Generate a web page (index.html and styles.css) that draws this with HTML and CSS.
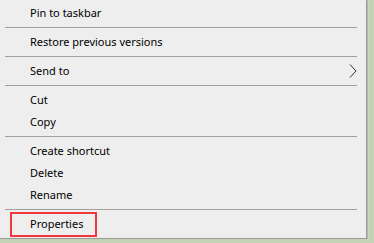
FILE: index.html
```html
<!DOCTYPE html>
<html lang="en">
<head>
    <meta charset="UTF-8">
    <title>Context menu</title>
    <link rel="stylesheet" href="styles.css">
</head>
<body>
    <div class="menu">
        <div class="item">Pin to taskbar</div>
        <div class="sep"></div>
        <div class="item">Restore previous versions</div>
        <div class="sep"></div>
        <div class="item">Send to
            <svg class="arrow" width="8" height="14" viewBox="0 0 8 14">
                <polyline points="1,0.5 7,7 1,13.5" fill="none" stroke="#3b2b33" stroke-width="1"/>
            </svg>
        </div>
        <div class="sep"></div>
        <div class="item">Cut</div>
        <div class="item">Copy</div>
        <div class="sep"></div>
        <div class="item">Create shortcut</div>
        <div class="item">Delete</div>
        <div class="item">Rename</div>
        <div class="sep"></div>
        <div class="item highlight">Properties</div>
    </div>
</body>
</html>
```

FILE: styles.css
```css
body {
    margin: 0;
    background: #c3d1b4;
    font-family: 'Noto Sans', sans-serif;
    font-size: 11px;
    color: #000;
}
.menu {
    width: 367px;
    height: 239px;
    padding-top: 2px;
    box-sizing: border-box;
    background: #eeeeee;
    border-right: 1px solid #9a9a9a;
    border-bottom: 1px solid #9a9a9a;
    box-shadow: 1px 1px 0 #b4b4b4, 2px 2px 0 #cfd6c8;
}
.item {
    position: relative;
    height: 22px;
    line-height: 22px;
    padding-left: 30px;
}
.sep {
    height: 1px;
    margin: 3px 9px 3px 5px;
    background: #a0a0a0;
}
.arrow {
    position: absolute;
    right: 9px;
    top: 4px;
}
.highlight::after {
    content: "";
    position: absolute;
    left: 10px;
    top: -1px;
    width: 83px;
    height: 21px;
    border: 2px solid #f0373c;
}
```
